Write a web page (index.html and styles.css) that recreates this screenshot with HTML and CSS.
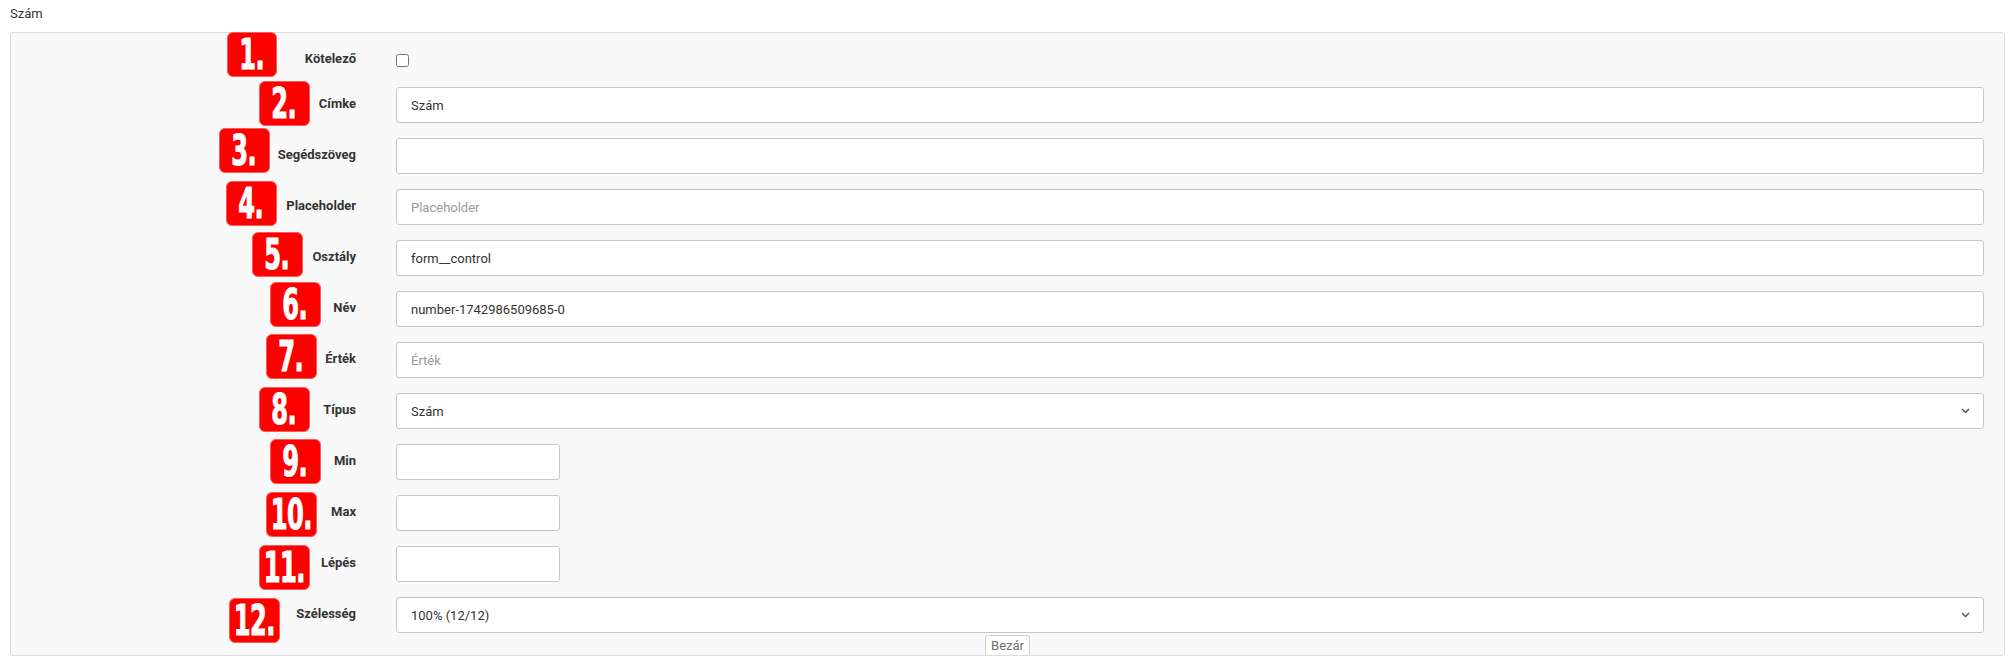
FILE: index.html
```html
<!DOCTYPE html>
<html lang="hu">
<head>
<meta charset="utf-8">
<title>Szám</title>
<link rel="stylesheet" href="styles.css">
</head>
<body>
<div class="page">
  <div class="title">Szám</div>
  <div class="panel">
    <div class="form">
      <div class="row row-check">
        <span class="badge b1"><span class="num">1.</span></span>
        <label class="lbl">Kötelező</label>
        <div class="ctl"><input type="checkbox" class="check"></div>
      </div>
      <div class="row">
        <span class="badge b2"><span class="num">2.</span></span>
        <label class="lbl">Címke</label>
        <div class="ctl"><input class="inp" type="text" value="Szám"></div>
      </div>
      <div class="row">
        <span class="badge b3"><span class="num">3.</span></span>
        <label class="lbl">Segédszöveg</label>
        <div class="ctl"><input class="inp" type="text" value=""></div>
      </div>
      <div class="row">
        <span class="badge b4"><span class="num">4.</span></span>
        <label class="lbl">Placeholder</label>
        <div class="ctl"><input class="inp" type="text" placeholder="Placeholder"></div>
      </div>
      <div class="row">
        <span class="badge b5"><span class="num">5.</span></span>
        <label class="lbl">Osztály</label>
        <div class="ctl"><input class="inp" type="text" value="form__control"></div>
      </div>
      <div class="row">
        <span class="badge b6"><span class="num">6.</span></span>
        <label class="lbl">Név</label>
        <div class="ctl"><input class="inp" type="text" value="number-1742986509685-0"></div>
      </div>
      <div class="row">
        <span class="badge b7"><span class="num">7.</span></span>
        <label class="lbl">Érték</label>
        <div class="ctl"><input class="inp" type="text" placeholder="Érték"></div>
      </div>
      <div class="row">
        <span class="badge b8"><span class="num">8.</span></span>
        <label class="lbl">Típus</label>
        <div class="ctl sel-wrap">
          <select class="inp sel"><option>Szám</option></select>
          <svg class="chev" width="9" height="6" viewBox="0 0 9 6"><polyline points="1,1 4.5,4.5 8,1" fill="none" stroke="#555" stroke-width="1.5"/></svg>
        </div>
      </div>
      <div class="row">
        <span class="badge b9"><span class="num">9.</span></span>
        <label class="lbl">Min</label>
        <div class="ctl"><input class="inp small" type="text"></div>
      </div>
      <div class="row">
        <span class="badge b10"><span class="num">10.</span></span>
        <label class="lbl">Max</label>
        <div class="ctl"><input class="inp small" type="text"></div>
      </div>
      <div class="row">
        <span class="badge b11"><span class="num">11.</span></span>
        <label class="lbl">Lépés</label>
        <div class="ctl"><input class="inp small" type="text"></div>
      </div>
      <div class="row">
        <span class="badge b12"><span class="num">12.</span></span>
        <label class="lbl">Szélesség</label>
        <div class="ctl sel-wrap">
          <select class="inp sel"><option>100% (12/12)</option></select>
          <svg class="chev" width="9" height="6" viewBox="0 0 9 6"><polyline points="1,1 4.5,4.5 8,1" fill="none" stroke="#555" stroke-width="1.5"/></svg>
        </div>
      </div>
    </div>
    <div class="footer">
      <button class="close" type="button">Bezár</button>
    </div>
  </div>
</div>
</body>
</html>
```

FILE: styles.css
```css
html, body {
  margin: 0;
  padding: 0;
  background: #fff;
}
body {
  font-family: Roboto, "Liberation Sans", sans-serif;
  color: #333;
  font-size: 13px;
}
.page {
  padding: 6px 8px 0 10px;
}
.title {
  font-size: 13px;
  line-height: 16px;
  color: #333;
  margin-bottom: 10px;
}
.panel {
  background: #f9f9f9;
  border: 1px solid #dcdcdc;
  border-radius: 3px;
  height: 624px;
  box-sizing: border-box;
  display: flex;
  flex-direction: column;
}
.form {
  padding: 12px 20px 0 0;
  display: flex;
  flex-direction: column;
  gap: 15px;
}
.row {
  position: relative;
  display: grid;
  grid-template-columns: 345px 1fr;
  column-gap: 40px;
  height: 36px;
  align-items: center;
}
.row-check {
  height: 30px;
  margin-bottom: -3px;
}
.lbl {
  text-align: right;
  font-weight: 700;
  font-size: 13px;
  line-height: 16px;
  color: #333;
  padding-bottom: 2px;
}
.ctl {
  display: flex;
  align-items: center;
  height: 100%;
}
.check {
  margin: 0;
  width: 13px;
  height: 13px;
}
.inp {
  box-sizing: border-box;
  width: 100%;
  height: 36px;
  border: 1px solid #c6c6c6;
  border-radius: 3px;
  background: #fff;
  padding: 0 14px;
  font-family: Roboto, "Liberation Sans", sans-serif;
  font-size: 13px;
  color: #333;
  outline: none;
}
.inp::placeholder {
  color: #9a9a9a;
}
.small {
  width: 164px;
}
.sel-wrap {
  position: relative;
}
.sel {
  appearance: none;
  -webkit-appearance: none;
}
.chev {
  position: absolute;
  right: 14px;
  top: 15px;
}
.footer {
  margin-top: auto;
  display: flex;
  justify-content: center;
}
.close {
  height: 20px;
  box-sizing: border-box;
  padding: 0 5px;
  background: #fff;
  border: 1px solid #cfcfcf;
  border-bottom: none;
  border-radius: 3px 3px 0 0;
  font-family: Roboto, "Liberation Sans", sans-serif;
  font-size: 13px;
  line-height: 18px;
  color: #6f6f6f;
}
.badge {
  position: absolute;
  width: 51px;
  height: 45px;
  box-sizing: border-box;
  background: #ff0000;
  border: 1px solid #ff5a5a;
  border-radius: 6px;
  display: flex;
  align-items: center;
  justify-content: center;
  z-index: 2;
}
.num {
  display: block;
  color: #fff;
  font-family: "DejaVu Sans Condensed", "DejaVu Sans", sans-serif;
  font-weight: 700;
  font-size: 42px;
  line-height: 42px;
  letter-spacing: -1px;
  white-space: nowrap;
  -webkit-text-stroke: 1px #fff;
  transform: scale(0.64, 1) translate(-1px, 0);
}
.b1 { left: 216px; top: -13px; width: 50px; }
.b2 { left: 248px; top: -6px; }
.b3 { left: 208px; top: -10px; }
.b4 { left: 215px; top: -8px; }
.b5 { left: 241px; top: -8px; }
.b6 { left: 259px; top: -9px; }
.b7 { left: 255px; top: -8px; }
.b8 { left: 248px; top: -6px; }
.b9 { left: 259px; top: -5px; }
.b10 { left: 255px; top: -3px; }
.b11 { left: 248px; top: -1px; }
.b12 { left: 218px; top: 1px; }
```
